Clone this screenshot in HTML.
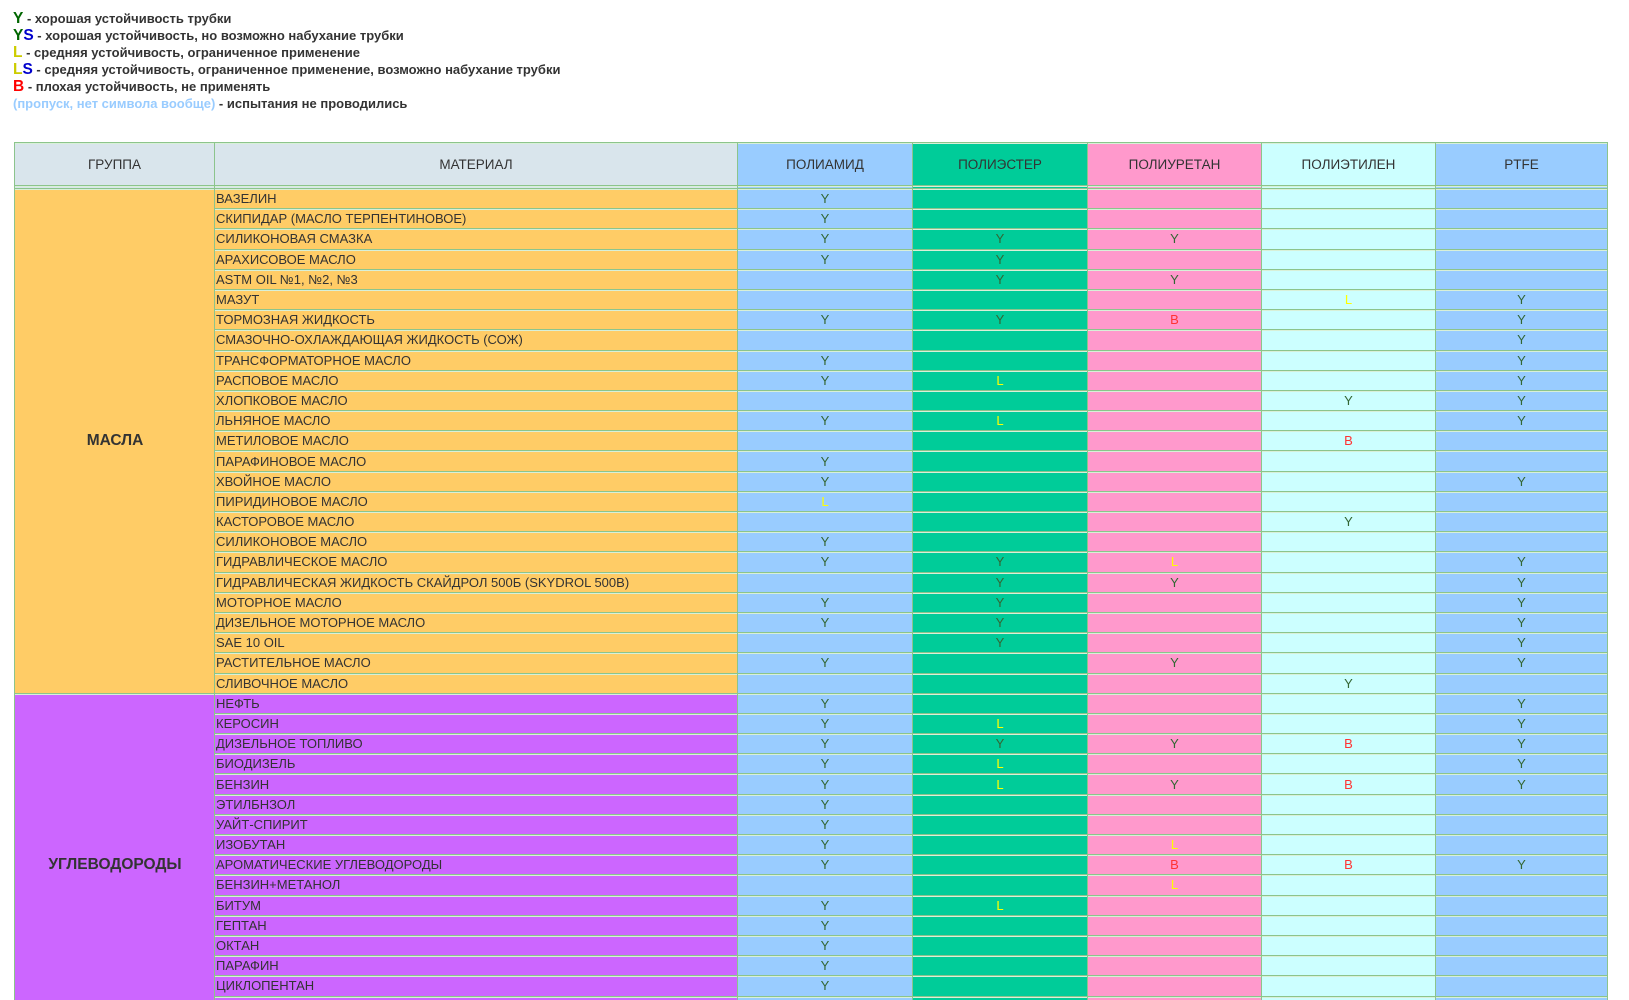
<!DOCTYPE html>
<html style="height:1000px;overflow:hidden"><head><meta charset="utf-8">
<style>
body{margin:0;height:1000px;background:#fff;font-family:"Liberation Sans",Arial,sans-serif;color:#333;overflow:hidden;position:relative}
.leg{position:absolute;left:13px;top:11px;font-size:13px;font-weight:bold;line-height:16.9px;color:#333;}
.leg b{font-size:15.5px}
table{position:absolute;left:14px;top:142px;border-collapse:collapse;table-layout:fixed;width:1593px;}
td{border:1px solid #8cc48c;box-shadow:inset 0 1px 0 #d8f0d8;padding:0;height:19.2px;font-size:13px;font-family:"Liberation Sans Narrow","Liberation Sans",sans-serif;text-align:center;line-height:17px;overflow:hidden;white-space:nowrap}
thead td{height:42px;font-size:13.5px}
td.m{text-align:left;padding-left:1px;background:#ffcc66}
tr.p td.m{background:#cc66ff}
td.g{font-family:"Liberation Sans",sans-serif;font-weight:bold;font-size:15.5px}
.a{background:#99ccff}.e{background:#00cc99}.u{background:#ff99cc}.t{background:#ccffff}.f{background:#99ccff}
.y{color:#336633}.l{color:#ffff00}.b{color:#ff3333}
tr.sp td{height:2px;line-height:0;font-size:0}
</style></head><body>
<div class="leg">
<div><b style="color:#006600">Y</b> - хорошая устойчивость трубки</div>
<div><b style="color:#006600">Y</b><b style="color:#0000cc">S</b> - хорошая устойчивость, но возможно набухание трубки</div>
<div><b style="color:#cccc00">L</b> - средняя устойчивость, ограниченное применение</div>
<div><b style="color:#cccc00">L</b><b style="color:#0000cc">S</b> - средняя устойчивость, ограниченное применение, возможно набухание трубки</div>
<div><b style="color:#ff0000">B</b> - плохая устойчивость, не применять</div>
<div><span style="color:#99ccff">(пропуск, нет символа вообще)</span> - испытания не проводились</div>
</div>
<table>
<colgroup><col style="width:200px"><col style="width:523px"><col style="width:175px"><col style="width:175px"><col style="width:174px"><col style="width:174px"><col style="width:172px"></colgroup>
<thead><tr><td style="background:#d9e5ec">ГРУППА</td><td style="background:#d9e5ec">МАТЕРИАЛ</td><td class="a">ПОЛИАМИД</td><td class="e">ПОЛИЭСТЕР</td><td class="u">ПОЛИУРЕТАН</td><td class="t">ПОЛИЭТИЛЕН</td><td class="f">PTFE</td></tr></thead>
<tbody>
<tr class="sp"><td style="background:#d9e5ec"></td><td style="background:#d9e5ec"></td><td class="a"></td><td class="e"></td><td class="u"></td><td class="t"></td><td class="f"></td></tr>
<tr><td class="g m" rowspan="25" style="text-align:center">МАСЛА</td><td class="m">ВАЗЕЛИН</td><td class="a y">Y</td><td class="e"></td><td class="u"></td><td class="t"></td><td class="f"></td></tr>
<tr><td class="m">СКИПИДАР (МАСЛО ТЕРПЕНТИНОВОЕ)</td><td class="a y">Y</td><td class="e"></td><td class="u"></td><td class="t"></td><td class="f"></td></tr>
<tr><td class="m">СИЛИКОНОВАЯ СМАЗКА</td><td class="a y">Y</td><td class="e y">Y</td><td class="u y">Y</td><td class="t"></td><td class="f"></td></tr>
<tr><td class="m">АРАХИСОВОЕ МАСЛО</td><td class="a y">Y</td><td class="e y">Y</td><td class="u"></td><td class="t"></td><td class="f"></td></tr>
<tr><td class="m">ASTM OIL №1, №2, №3</td><td class="a"></td><td class="e y">Y</td><td class="u y">Y</td><td class="t"></td><td class="f"></td></tr>
<tr><td class="m">МАЗУТ</td><td class="a"></td><td class="e"></td><td class="u"></td><td class="t l">L</td><td class="f y">Y</td></tr>
<tr><td class="m">ТОРМОЗНАЯ ЖИДКОСТЬ</td><td class="a y">Y</td><td class="e y">Y</td><td class="u b">B</td><td class="t"></td><td class="f y">Y</td></tr>
<tr><td class="m">СМАЗОЧНО-ОХЛАЖДАЮЩАЯ ЖИДКОСТЬ (СОЖ)</td><td class="a"></td><td class="e"></td><td class="u"></td><td class="t"></td><td class="f y">Y</td></tr>
<tr><td class="m">ТРАНСФОРМАТОРНОЕ МАСЛО</td><td class="a y">Y</td><td class="e"></td><td class="u"></td><td class="t"></td><td class="f y">Y</td></tr>
<tr><td class="m">РАСПОВОЕ МАСЛО</td><td class="a y">Y</td><td class="e l">L</td><td class="u"></td><td class="t"></td><td class="f y">Y</td></tr>
<tr><td class="m">ХЛОПКОВОЕ МАСЛО</td><td class="a"></td><td class="e"></td><td class="u"></td><td class="t y">Y</td><td class="f y">Y</td></tr>
<tr><td class="m">ЛЬНЯНОЕ МАСЛО</td><td class="a y">Y</td><td class="e l">L</td><td class="u"></td><td class="t"></td><td class="f y">Y</td></tr>
<tr><td class="m">МЕТИЛОВОЕ МАСЛО</td><td class="a"></td><td class="e"></td><td class="u"></td><td class="t b">B</td><td class="f"></td></tr>
<tr><td class="m">ПАРАФИНОВОЕ МАСЛО</td><td class="a y">Y</td><td class="e"></td><td class="u"></td><td class="t"></td><td class="f"></td></tr>
<tr><td class="m">ХВОЙНОЕ МАСЛО</td><td class="a y">Y</td><td class="e"></td><td class="u"></td><td class="t"></td><td class="f y">Y</td></tr>
<tr><td class="m">ПИРИДИНОВОЕ МАСЛО</td><td class="a l">L</td><td class="e"></td><td class="u"></td><td class="t"></td><td class="f"></td></tr>
<tr><td class="m">КАСТОРОВОЕ МАСЛО</td><td class="a"></td><td class="e"></td><td class="u"></td><td class="t y">Y</td><td class="f"></td></tr>
<tr><td class="m">СИЛИКОНОВОЕ МАСЛО</td><td class="a y">Y</td><td class="e"></td><td class="u"></td><td class="t"></td><td class="f"></td></tr>
<tr><td class="m">ГИДРАВЛИЧЕСКОЕ МАСЛО</td><td class="a y">Y</td><td class="e y">Y</td><td class="u l">L</td><td class="t"></td><td class="f y">Y</td></tr>
<tr><td class="m">ГИДРАВЛИЧЕСКАЯ ЖИДКОСТЬ СКАЙДРОЛ 500Б (SKYDROL 500B)</td><td class="a"></td><td class="e y">Y</td><td class="u y">Y</td><td class="t"></td><td class="f y">Y</td></tr>
<tr><td class="m">МОТОРНОЕ МАСЛО</td><td class="a y">Y</td><td class="e y">Y</td><td class="u"></td><td class="t"></td><td class="f y">Y</td></tr>
<tr><td class="m">ДИЗЕЛЬНОЕ МОТОРНОЕ МАСЛО</td><td class="a y">Y</td><td class="e y">Y</td><td class="u"></td><td class="t"></td><td class="f y">Y</td></tr>
<tr><td class="m">SAE 10 OIL</td><td class="a"></td><td class="e y">Y</td><td class="u"></td><td class="t"></td><td class="f y">Y</td></tr>
<tr><td class="m">РАСТИТЕЛЬНОЕ МАСЛО</td><td class="a y">Y</td><td class="e"></td><td class="u y">Y</td><td class="t"></td><td class="f y">Y</td></tr>
<tr><td class="m">СЛИВОЧНОЕ МАСЛО</td><td class="a"></td><td class="e"></td><td class="u"></td><td class="t y">Y</td><td class="f"></td></tr>
<tr class="p"><td class="g m" rowspan="17" style="text-align:center">УГЛЕВОДОРОДЫ</td><td class="m">НЕФТЬ</td><td class="a y">Y</td><td class="e"></td><td class="u"></td><td class="t"></td><td class="f y">Y</td></tr>
<tr class="p"><td class="m">КЕРОСИН</td><td class="a y">Y</td><td class="e l">L</td><td class="u"></td><td class="t"></td><td class="f y">Y</td></tr>
<tr class="p"><td class="m">ДИЗЕЛЬНОЕ ТОПЛИВО</td><td class="a y">Y</td><td class="e y">Y</td><td class="u y">Y</td><td class="t b">B</td><td class="f y">Y</td></tr>
<tr class="p"><td class="m">БИОДИЗЕЛЬ</td><td class="a y">Y</td><td class="e l">L</td><td class="u"></td><td class="t"></td><td class="f y">Y</td></tr>
<tr class="p"><td class="m">БЕНЗИН</td><td class="a y">Y</td><td class="e l">L</td><td class="u y">Y</td><td class="t b">B</td><td class="f y">Y</td></tr>
<tr class="p"><td class="m">ЭТИЛБНЗОЛ</td><td class="a y">Y</td><td class="e"></td><td class="u"></td><td class="t"></td><td class="f"></td></tr>
<tr class="p"><td class="m">УАЙТ-СПИРИТ</td><td class="a y">Y</td><td class="e"></td><td class="u"></td><td class="t"></td><td class="f"></td></tr>
<tr class="p"><td class="m">ИЗОБУТАН</td><td class="a y">Y</td><td class="e"></td><td class="u l">L</td><td class="t"></td><td class="f"></td></tr>
<tr class="p"><td class="m">АРОМАТИЧЕСКИЕ УГЛЕВОДОРОДЫ</td><td class="a y">Y</td><td class="e"></td><td class="u b">B</td><td class="t b">B</td><td class="f y">Y</td></tr>
<tr class="p"><td class="m">БЕНЗИН+МЕТАНОЛ</td><td class="a"></td><td class="e"></td><td class="u l">L</td><td class="t"></td><td class="f"></td></tr>
<tr class="p"><td class="m">БИТУМ</td><td class="a y">Y</td><td class="e l">L</td><td class="u"></td><td class="t"></td><td class="f"></td></tr>
<tr class="p"><td class="m">ГЕПТАН</td><td class="a y">Y</td><td class="e"></td><td class="u"></td><td class="t"></td><td class="f"></td></tr>
<tr class="p"><td class="m">ОКТАН</td><td class="a y">Y</td><td class="e"></td><td class="u"></td><td class="t"></td><td class="f"></td></tr>
<tr class="p"><td class="m">ПАРАФИН</td><td class="a y">Y</td><td class="e"></td><td class="u"></td><td class="t"></td><td class="f"></td></tr>
<tr class="p"><td class="m">ЦИКЛОПЕНТАН</td><td class="a y">Y</td><td class="e"></td><td class="u"></td><td class="t"></td><td class="f"></td></tr>
<tr class="p"><td class="m">&nbsp;</td><td class="a"></td><td class="e"></td><td class="u"></td><td class="t"></td><td class="f"></td></tr>
<tr class="p"><td class="m">&nbsp;</td><td class="a"></td><td class="e"></td><td class="u"></td><td class="t"></td><td class="f"></td></tr>
</tbody></table>
</body></html>
